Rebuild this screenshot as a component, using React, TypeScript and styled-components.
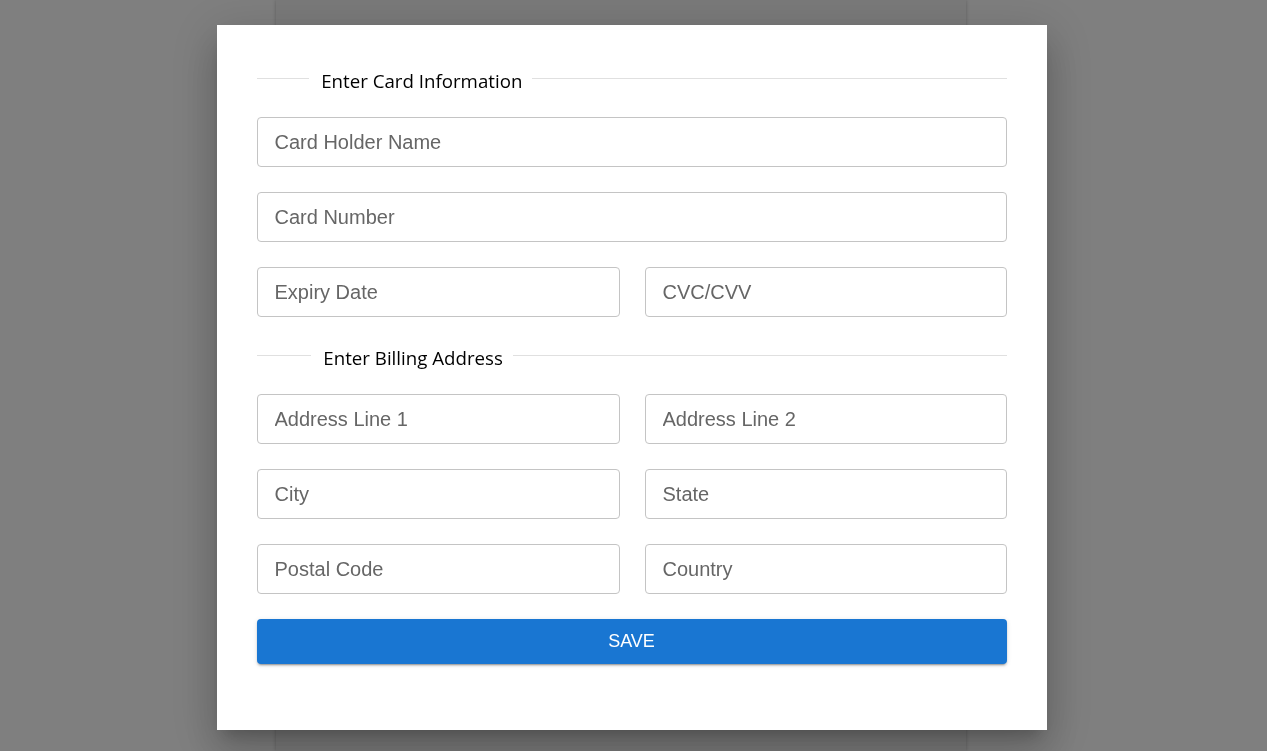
import React from 'react';
import styled, { createGlobalStyle } from 'styled-components';

const GlobalStyle = createGlobalStyle`
    html, body {
        margin: 0;
        padding: 0;
        background: #ffffff;
    }
    body {
        font-family: "Liberation Sans", Arial, sans-serif;
    }
`;

export const Pagina = styled.div`
    height: 751px;
    overflow: hidden;
    padding-left: 276px;
    box-sizing: border-box;
`;

export const ColunaFundo = styled.div`
    width: 690px;
    height: 100%;
    background-color: #f4f4f4;
    box-shadow: 0 0 4px rgba(0, 0, 0, 0.25);
`;

export const Sobreposicao = styled.div`
    position: fixed;
    inset: 0;
    background-color: rgba(0, 0, 0, 0.5);
    display: flex;
    justify-content: center;
    align-items: flex-start;
    padding: 25px 4px 0 0;
    box-sizing: border-box;
`;

export const Modal = styled.div`
    width: 830px;
    box-sizing: border-box;
    background-color: #ffffff;
    padding: 40px 40px 66px 40px;
    box-shadow: 0px 11px 15px -7px rgba(0, 0, 0, 0.2),
        0px 24px 38px 3px rgba(0, 0, 0, 0.14),
        0px 9px 46px 8px rgba(0, 0, 0, 0.12);
`;

export const Formulario = styled.form`
    display: flex;
    flex-direction: column;
    gap: 25px;
`;

export const Divisor = styled.div`
    display: flex;
    align-items: center;
    height: 27px;

    &::before, &::after {
        content: "";
        border-top: 1px solid #e0e0e0;
        align-self: center;
    }
    &::before {
        width: 10%;
    }
    &::after {
        width: 90%;
    }
`;

export const TituloDivisor = styled.span`
    padding: 4px 10px 0 12px;
    white-space: nowrap;
    font-family: "Open Sans", "Noto Sans", sans-serif;
    font-size: 18.7px;
    color: #000000;
    line-height: 27px;
`;

export const Linha = styled.div`
    display: grid;
    grid-template-columns: 363px 1fr;
    gap: 25px;
`;

export const Campo = styled.input`
    width: 100%;
    height: 50px;
    box-sizing: border-box;
    border: 1px solid #c4c4c4;
    border-radius: 4px;
    padding: 0 17px;
    font-family: "Liberation Sans", Arial, sans-serif;
    font-size: 20px;
    color: #222;
    outline: none;

    &::placeholder {
        color: #666666;
    }
`;

export const BotaoSalvar = styled.button`
    height: 45px;
    border: none;
    border-radius: 4px;
    background-color: #1976d2;
    color: #ffffff;
    font-family: "Liberation Sans", Arial, sans-serif;
    font-size: 18px;
    text-transform: uppercase;
    cursor: pointer;
    box-shadow: 0px 3px 1px -2px rgba(0, 0, 0, 0.2),
        0px 2px 2px 0px rgba(0, 0, 0, 0.14),
        0px 1px 5px 0px rgba(0, 0, 0, 0.12);
`;

type DivisorProps = {
    titulo: string;
}

const TituloSecao: React.FC<DivisorProps> = ({ titulo }) => {
    return (
        <Divisor>
            <TituloDivisor>{titulo}</TituloDivisor>
        </Divisor>
    );
};

const App: React.FC = () => {
    return (
        <>
            <GlobalStyle />
            <Pagina>
                <ColunaFundo />
            </Pagina>
            <Sobreposicao>
                <Modal>
                    <Formulario onSubmit={(e) => e.preventDefault()}>
                        <TituloSecao titulo="Enter Card Information" />
                        <Campo placeholder="Card Holder Name" />
                        <Campo placeholder="Card Number" />
                        <Linha>
                            <Campo placeholder="Expiry Date" />
                            <Campo placeholder="CVC/CVV" />
                        </Linha>
                        <TituloSecao titulo="Enter Billing Address" />
                        <Linha>
                            <Campo placeholder="Address Line 1" />
                            <Campo placeholder="Address Line 2" />
                        </Linha>
                        <Linha>
                            <Campo placeholder="City" />
                            <Campo placeholder="State" />
                        </Linha>
                        <Linha>
                            <Campo placeholder="Postal Code" />
                            <Campo placeholder="Country" />
                        </Linha>
                        <BotaoSalvar type="submit">Save</BotaoSalvar>
                    </Formulario>
                </Modal>
            </Sobreposicao>
        </>
    );
};

export default App;
